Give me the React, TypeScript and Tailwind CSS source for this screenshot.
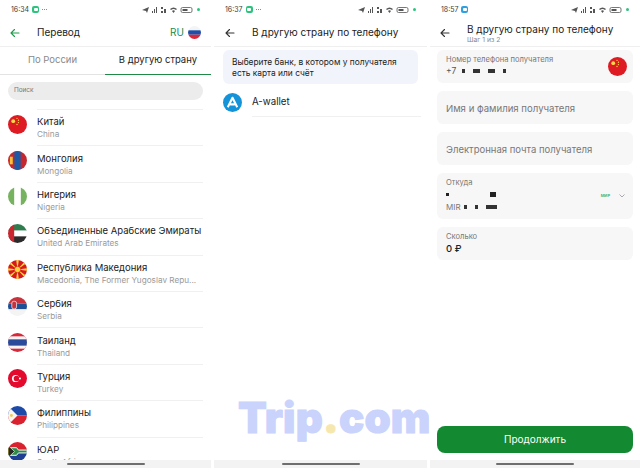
const font = "[font-family:Inter,'Noto_Sans',sans-serif]";

// ── Flags ─────────────────────────────────────────────────────────────────────

function Flag({ children, size = 19, className = "" }: { children: React.ReactNode; size?: number; className?: string }) {
  return (
    <svg width={size} height={size} viewBox="0 0 20 20" className={`shrink-0 ${className}`}>
      <defs>
        <clipPath id="flag-circle">
          <circle cx="10" cy="10" r="10" />
        </clipPath>
      </defs>
      <g clipPath="url(#flag-circle)">{children}</g>
    </svg>
  );
}

const China = () => (
  <>
    <rect width="20" height="20" fill="#de1a23" />
    <circle cx="5.5" cy="6.5" r="2" fill="#fbd84a" />
    <circle cx="9.5" cy="3.5" r="0.7" fill="#fbd84a" />
    <circle cx="11" cy="5.5" r="0.7" fill="#fbd84a" />
    <circle cx="11" cy="8" r="0.7" fill="#fbd84a" />
    <circle cx="9.5" cy="10" r="0.7" fill="#fbd84a" />
  </>
);

const flags: Record<string, React.ReactNode> = {
  china: <China />,
  mongolia: (
    <>
      <rect width="20" height="20" fill="#c4272f" />
      <rect x="6.7" width="6.6" height="20" fill="#1c5aa6" />
      <rect x="2" y="6" width="3" height="8" fill="#f7c53a" />
    </>
  ),
  nigeria: (
    <>
      <rect width="20" height="20" fill="#fff" />
      <rect width="6.5" height="20" fill="#76b35f" />
      <rect x="13.5" width="6.5" height="20" fill="#76b35f" />
    </>
  ),
  uae: (
    <>
      <rect width="20" height="7" fill="#2f7d4f" />
      <rect y="7" width="20" height="6" fill="#fff" />
      <rect y="13" width="20" height="7" fill="#2b2b2b" />
      <rect width="6.5" height="20" fill="#c8272d" />
    </>
  ),
  macedonia: (
    <>
      <rect width="20" height="20" fill="#d7191f" />
      <path d="M10 10L8.6 0h2.8zM10 10L8.6 20h2.8zM10 10L0 8.6v2.8zM10 10L20 8.6v2.8zM10 10L2 1l-2 2zM10 10L18 1l2 2zM10 10L2 19l-2-2zM10 10L18 19l2-2z" fill="#fbd53c" />
      <circle cx="10" cy="10" r="3.4" fill="#fbd53c" stroke="#d7191f" strokeWidth="0.8" />
    </>
  ),
  serbia: (
    <>
      <rect width="20" height="7" fill="#c8323c" />
      <rect y="7" width="20" height="6" fill="#1f4f94" />
      <rect y="13" width="20" height="7" fill="#f4f4f4" />
      <rect x="4" y="4.5" width="5" height="8" rx="2" fill="#c8323c" stroke="#f2f2f2" strokeWidth="0.8" />
    </>
  ),
  thailand: (
    <>
      <rect width="20" height="20" fill="#d8283a" />
      <rect y="3.5" width="20" height="13" fill="#f4f4f4" />
      <rect y="6.7" width="20" height="6.6" fill="#2a4a9a" />
    </>
  ),
  turkey: (
    <>
      <rect width="20" height="20" fill="#e30a2e" />
      <circle cx="8" cy="10" r="3.8" fill="#fff" />
      <circle cx="9" cy="10" r="3" fill="#e30a2e" />
      <circle cx="12.6" cy="10" r="1.1" fill="#fff" />
    </>
  ),
  philippines: (
    <>
      <rect width="20" height="10" fill="#1d49a8" />
      <rect y="10" width="20" height="10" fill="#d8222f" />
      <path d="M0 0L10 10L0 20z" fill="#f5f5f5" />
      <circle cx="3.6" cy="10" r="1.5" fill="#f7c93c" />
    </>
  ),
  sa: (
    <>
      <rect width="20" height="10" fill="#d8222f" />
      <rect y="10" width="20" height="10" fill="#1f3f94" />
      <path d="M0 6H9L11 8.5H20V11.5H11L9 14H0" fill="#2f8a4e" stroke="#fff" strokeWidth="1" />
      <path d="M0 3.5L7 10L0 16.5z" fill="#2a2a2a" stroke="#f5c93c" strokeWidth="1" />
    </>
  ),
};

const countries = [
  { flag: "china", name: "Китай", sub: "China" },
  { flag: "mongolia", name: "Монголия", sub: "Mongolia" },
  { flag: "nigeria", name: "Нигерия", sub: "Nigeria" },
  { flag: "uae", name: "Объединенные Арабские Эмираты", sub: "United Arab Emirates" },
  { flag: "macedonia", name: "Республика Македония", sub: "Macedonia, The Former Yugoslav Repu..." },
  { flag: "serbia", name: "Сербия", sub: "Serbia" },
  { flag: "thailand", name: "Таиланд", sub: "Thailand" },
  { flag: "turkey", name: "Турция", sub: "Turkey" },
  { flag: "philippines", name: "Филиппины", sub: "Philippines" },
  { flag: "sa", name: "ЮАР", sub: "South Africa" },
];

// ── Shared bits ───────────────────────────────────────────────────────────────

function StatusBar({ time, app }: { time: string; app: "green" | "blue" }) {
  return (
    <div className="flex h-[19px] shrink-0 items-center justify-between pl-[11px] pr-[11px] text-[#3d3d3d]">
      <div className="flex items-center gap-[3px]">
        <span className="text-[7px] leading-none">{time}</span>
        <span className={`flex h-[7px] w-[7px] items-center justify-center rounded-[2px] ${app === "green" ? "bg-[#2ec27e]" : "bg-[#2e9fe0]"}`}>
          <span className="h-[3px] w-[4px] rounded-[1px] bg-white" />
        </span>
        {app === "green" && (
          <span className="flex gap-[1px]">
            <span className="h-[1px] w-[1px] rounded-full bg-[#666]" />
            <span className="h-[1px] w-[1px] rounded-full bg-[#666]" />
            <span className="h-[1px] w-[1px] rounded-full bg-[#666]" />
          </span>
        )}
      </div>
      <div className="flex items-center gap-[3px]">
        <svg width="52" height="8" viewBox="0 0 52 8" fill="#555">
          <path d="M0 4L7 1L5 7L4 5z" />
          <path d="M10 7h1V5h-1zM12 7h1V3h-1zM14 7h1V1h-1z" />
          <path d="M19 1h2v2h-2zM22 3h2v4h-2zM19 5h2v2h-2z" />
          <path d="M28 3q3.500-3 7 0l-1 1q-2.500-2-5 0zM30 5q1.500-1.500 3 0l-1.500 2z" />
          <rect x="39" y="1.500" width="11" height="5" rx="1.500" fill="none" stroke="#555" strokeWidth="0.8" />
          <rect x="40.500" y="3" width="5" height="2" />
        </svg>
        <span className="h-[3px] w-[3px] rounded-full bg-[#2ec27e]" />
      </div>
    </div>
  );
}

function BackArrow({ color = "#333" }: { color?: string }) {
  return (
    <svg width="10" height="10" viewBox="0 0 10 10" fill="none" stroke={color} strokeWidth="1.1" strokeLinecap="round" strokeLinejoin="round" className="shrink-0">
      <path d="M9 5H1M4.500 1.500L1 5l3.500 3.500" />
    </svg>
  );
}

function HomeBar() {
  return (
    <div className="flex h-[8px] shrink-0 items-center justify-center bg-[#f3f3f3]">
      <div className="h-[2px] w-[78px] rounded-full bg-[#6e6e6e]" />
    </div>
  );
}

// ── Panels ────────────────────────────────────────────────────────────────────

function CountryPanel() {
  return (
    <div className="flex w-[211px] flex-col bg-white">
      <StatusBar time="16:34" app="green" />
      <div className="flex h-[28px] shrink-0 items-center border-b border-[#efefef] pl-[10px] pr-[10px]">
        <BackArrow color="#1f9a4b" />
        <span className="ml-[17px] text-[10px] text-[#222]">Перевод</span>
        <span className="ml-auto text-[10px] text-[#1f8a45]">RU</span>
        <svg width="13" height="13" viewBox="0 0 13 13" className="ml-[4px]">
          <clipPath id="ru-flag"><circle cx="6.500" cy="6.500" r="6.500" /></clipPath>
          <g clipPath="url(#ru-flag)">
            <rect width="13" height="4.300" fill="#f4f4f4" />
            <rect y="4.300" width="13" height="4.400" fill="#1f4fa8" />
            <rect y="8.700" width="13" height="4.300" fill="#d8283a" />
          </g>
        </svg>
      </div>
      <div className="flex h-[28px] shrink-0 border-b border-[#e3e3e3] text-[9.500px]">
        <div className="flex w-[105px] items-center justify-center text-[#8a8a8a]">По России</div>
        <div className="-mb-px flex flex-1 items-center justify-center border-b border-[#1f8a45] text-[#222]">В другую страну</div>
      </div>
      <div className="mx-[8px] mt-[7px] flex h-[18px] shrink-0 items-center rounded-full bg-[#ececec] px-[6px] text-[6.400px] text-[#777]">
        Поиск
      </div>
      <div className="mt-[9px] min-h-0 flex-1 overflow-hidden">
        {countries.map((c) => (
          <div key={c.flag} className="flex h-[36.400px] items-center pl-[8px]">
            <Flag className="mb-[6px]">{flags[c.flag]}</Flag>
            <div className="ml-[10px] mr-[8px] flex h-full min-w-0 flex-1 flex-col justify-center border-t border-[#f0f0f0]">
              <div className="truncate text-[9.500px] leading-[13px] text-[#222]">{c.name}</div>
              <div className="truncate text-[8.200px] leading-[12px] text-[#9a9a9a]">{c.sub}</div>
            </div>
          </div>
        ))}
      </div>
      <HomeBar />
    </div>
  );
}

function BankPanel() {
  return (
    <div className="relative flex w-[213px] flex-col bg-white">
      <StatusBar time="16:37" app="green" />
      <div className="flex h-[28px] shrink-0 items-center border-b border-[#efefef] pl-[11px]">
        <BackArrow />
        <span className="ml-[17px] text-[10px] text-[#222]">В другую страну по телефону</span>
      </div>
      <div className="mx-[9px] mt-[3px] rounded-[6px] bg-[#f1f4fb] px-[9px] pb-[5px] pt-[7px] text-[8.400px] leading-[11px] text-[#222]">
        Выберите банк, в котором у получателя<br />есть карта или счёт
      </div>
      <div className="ml-[9px] mr-[6px] mt-[1px] flex h-[32px] items-center">
        <svg width="19" height="19" viewBox="0 0 20 20" className="mt-[3px] shrink-0">
          <circle cx="10" cy="10" r="10" fill="#1593d8" />
          <path d="M5 15L10 5l5 10M7.500 12h5" fill="none" stroke="#fff" strokeWidth="2.200" strokeLinejoin="round" />
        </svg>
        <div className="ml-[10px] flex h-full flex-1 items-center border-b border-[#f0f0f0] pt-[3px] text-[9.700px] text-[#222]">A-wallet</div>
      </div>
      <div className="flex-1" />
      <div className="absolute left-[24px] top-[397px] text-[42px] font-black leading-none tracking-[0.2px] text-[#c9d3fb] [-webkit-text-stroke:1px_#c9d3fb]">
        Trip<span className="text-[#f6e7ae] [-webkit-text-stroke:1px_#f6e7ae]">.</span>com
      </div>
      <HomeBar />
    </div>
  );
}

function Pixels({ widths }: { widths: number[] }) {
  return (
    <span className="inline-flex items-center gap-[8px]">
      {widths.map((w, i) => (
        <span key={i} className="h-[4px] bg-[#333]" style={{ width: w }} />
      ))}
    </span>
  );
}

function FormPanel() {
  return (
    <div className="flex w-[210px] flex-col bg-white">
      <StatusBar time="18:57" app="blue" />
      <div className="flex h-[28px] shrink-0 items-center border-b border-[#efefef] pl-[10px]">
        <BackArrow />
        <div className="ml-[17px]">
          <div className="text-[10px] leading-[12px] text-[#222]">В другую страну по телефону</div>
          <div className="mt-[1px] text-[6.800px] leading-[7px] text-[#8a8a8a]">Шаг 1 из 2</div>
        </div>
      </div>
      <div className="flex flex-col gap-[8px] px-[7px] pt-[3px]">
        <div className="flex h-[33px] items-center justify-between rounded-[6px] bg-[#f7f7f7] pl-[9px] pr-[6px]">
          <div className="pb-[2px]">
            <div className="text-[7.600px] leading-[11px] text-[#777]">Номер телефона получателя</div>
            <div className="flex items-center gap-[6px] text-[8.500px] leading-[13px] text-[#555]">+7 <Pixels widths={[3, 7, 7, 3]} /></div>
          </div>
          <Flag>{flags.china}</Flag>
        </div>
        <div className="flex h-[33px] items-center rounded-[6px] bg-[#f7f7f7] px-[9px] pt-[3px] text-[9.600px] text-[#777]">Имя и фамилия получателя</div>
        <div className="flex h-[33px] items-center rounded-[6px] bg-[#f7f7f7] px-[9px] pt-[3px] text-[9.500px] text-[#777]">Электронная почта получателя</div>
        <div className="flex h-[46px] items-center justify-between rounded-[6px] bg-[#f7f7f7] pl-[9px] pr-[8px]">
          <div className="pb-[2px]">
            <div className="text-[7.600px] leading-[11px] text-[#777]">Откуда</div>
            <div className="flex h-[13px] items-center"><span className="h-[3px] w-[3px] bg-[#222]" /><span className="ml-[41px] h-[5px] w-[6px] bg-[#222]" /></div>
            <div className="flex items-center gap-[3px] text-[8px] leading-[13px] text-[#777]">MIR <Pixels widths={[3, 3, 11]} /></div>
          </div>
          <div className="flex items-center gap-[9px]">
            <span className="text-[4px] font-bold text-[#3fb87f]">МИР</span>
            <svg width="6" height="4" viewBox="0 0 6 4" fill="none" stroke="#888" strokeWidth="0.7"><path d="M0.500 0.500L3 3l2.500-2.500" /></svg>
          </div>
        </div>
        <div className="flex h-[33px] flex-col justify-center rounded-[6px] bg-[#f7f7f7] px-[9px] pb-[1px]">
          <div className="text-[7.600px] leading-[11px] text-[#777]">Сколько</div>
          <div className="text-[9.500px] leading-[13px] font-medium text-[#222]">0 ₽</div>
        </div>
      </div>
      <div className="flex-1" />
      <div className="mx-[7px] mb-[7px] flex h-[27px] items-center justify-center rounded-[8px] bg-[#138a32] text-[10px] text-white">
        Продолжить
      </div>
      <HomeBar />
    </div>
  );
}

export default function App() {
  return (
    <div className={`flex h-[468px] w-[640px] justify-between overflow-hidden bg-white ${font}`}>
      <CountryPanel />
      <BankPanel />
      <FormPanel />
    </div>
  );
}
